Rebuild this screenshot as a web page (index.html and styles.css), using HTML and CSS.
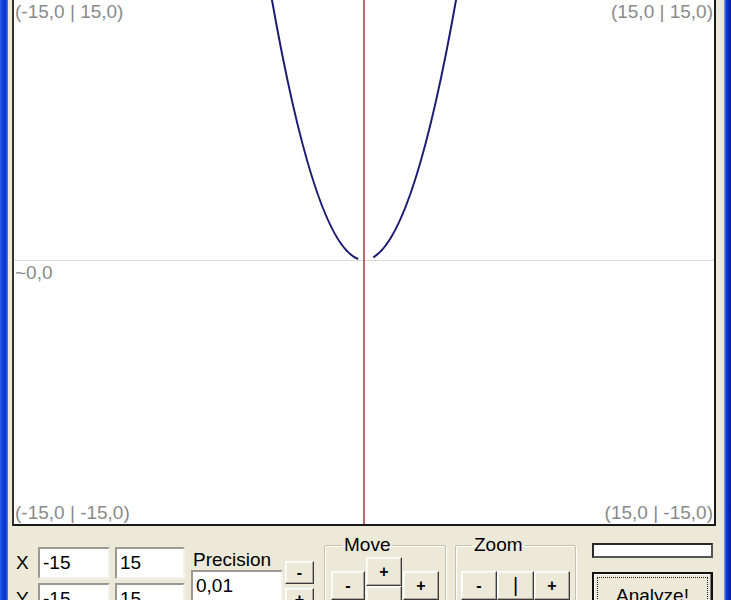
FILE: index.html
```html
<!DOCTYPE html>
<html lang="en">
<head>
    <meta charset="UTF-8">
    <title>Function plotter</title>
    <link rel="stylesheet" href="styles.css">
</head>
<body>
<div class="frame-l"></div>

<div class="client">
    <!-- 그래프 영역 -->
    <div class="plot">
        <svg class="graph" width="700" height="526" viewBox="0 0 700 526">
            <line x1="0" y1="262.5" x2="700" y2="262.5" stroke="#dcdcdc" stroke-width="1"/>
            <line x1="350" y1="0" x2="350" y2="526" stroke="#a83a3a" stroke-width="1.5"/>
            <path d="M254.3 -19.1 Q299.3 244.9 344.2 261" fill="none" stroke="#1c1c72" stroke-width="2"/>
            <path d="M359.3 259.3 Q402.5 234.6 445.7 -19.1" fill="none" stroke="#1c1c72" stroke-width="2"/>
        </svg>
        <span class="tag tl">(-15,0 | 15,0)</span>
        <span class="tag tr">(15,0 | 15,0)</span>
        <span class="tag origin">~0,0</span>
        <span class="tag bl">(-15,0 | -15,0)</span>
        <span class="tag br">(15,0 | -15,0)</span>
    </div>

    <!-- 아래 조작 패널 -->
    <div class="panel">
        <div class="coords">
            <span class="axis">X</span>
            <input class="field" type="text" value="-15">
            <input class="field second" type="text" value="15">
            <span class="axis">Y</span>
            <input class="field" type="text" value="-15">
            <input class="field second" type="text" value="15">
        </div>

        <div class="precision">
            <span class="label">Precision</span>
            <input class="field" type="text" value="0,01">
        </div>
        <div class="spin">
            <button class="btn">-</button>
            <button class="btn">+</button>
        </div>

        <fieldset class="group move">
            <legend>Move</legend>
            <div class="cross">
                <button class="btn up">+</button>
                <button class="btn left">-</button>
                <button class="btn right">+</button>
                <button class="btn down">-</button>
            </div>
        </fieldset>

        <fieldset class="group zoom">
            <legend>Zoom</legend>
            <div class="zoom-row">
                <button class="btn">-</button>
                <button class="btn">|</button>
                <button class="btn">+</button>
            </div>
        </fieldset>

        <div class="run">
            <div class="progress"></div>
            <button class="btn analyze"><span>Analyze!</span></button>
        </div>
    </div>
</div>

<div class="frame-r"></div>
</body>
</html>
```

FILE: styles.css
```css
*{
    box-sizing: border-box;
}
body{
    margin: 0;
    height: 600px;
    overflow: hidden;
    display: flex;
    background-color: #ece9d8;
    font-family: "Liberation Sans", Arial, sans-serif;
}

/* 창 테두리 */
.frame-l{
    width: 8px;
    flex-shrink: 0;
    background: linear-gradient(to right, #2a5be8, #0b3ad6 40%, #0a36cc 70%, #4f7ae8);
}
.frame-r{
    width: 7px;
    flex-shrink: 0;
    background: linear-gradient(to right, #8fa9ec, #1240d8 30%, #0628b4 70%, #001c98);
}
.client{
    width: 716px;
    padding: 0 8px 0 4px;
}

/* 그래프 */
.plot{
    position: relative;
    width: 704px;
    height: 530px;
    margin-top: -4px;
    background-color: #fff;
    border: 2px solid #1a1a1a;
    border-left-color: #333;
}
.graph{
    display: block;
}
.tag{
    position: absolute;
    font-size: 19px;
    line-height: 22px;
    color: #8a8a8a;
    white-space: nowrap;
}
.tl{ top: 3px; left: 1px; }
.tr{ top: 3px; right: 1px; }
.origin{ top: 264px; left: 1px; }
.bl{ bottom: 0; left: 1px; }
.br{ bottom: 0; right: 1px; }

/* 패널 */
.panel{
    display: flex;
    align-items: flex-start;
    height: 74px;
    font-size: 18px;
    color: #000;
}
.coords{
    display: grid;
    grid-template-columns: 20px 72px 75px;
    grid-auto-rows: 32px;
    row-gap: 4px;
    margin: 21px 0 0 6px;
}
.axis{
    line-height: 32px;
    font-size: 19px;
    margin-left: -2px;
}
.field{
    width: 72px;
    height: 32px;
    padding: 0 0 0 3px;
    font: 19px "Liberation Sans", Arial, sans-serif;
    color: #000;
    background-color: #fff;
    border: 2px solid;
    border-color: #9c9a90 #f2f1ea #f2f1ea #9c9a90;
    outline: none;
}
.coords .second{
    width: 70px;
    margin-left: 5px;
}
.precision{
    display: flex;
    flex-direction: column;
    margin: 21px 0 0 6px;
    width: 92px;
}
.label{
    line-height: 21px;
    font-size: 19px;
    padding: 2px 0 0 2px;
}
.precision .field{
    width: 92px;
}

/* 버튼 */
.btn{
    display: block;
    padding: 0;
    font: bold 16px "Liberation Sans", Arial, sans-serif;
    color: #000;
    background-color: #ece9d8;
    border: 1px solid;
    border-color: #fff #3c3c3c #3c3c3c #fff;
    box-shadow: inset -1px -1px #aca899, inset 1px 1px #f7f6f0;
}
.spin{
    margin: 35px 0 0 2px;
}
.spin .btn{
    width: 29px;
    height: 23px;
    margin-bottom: 4px;
}

/* 그룹박스 */
.group{
    margin: 9px 0 0 0;
    padding: 2px 0 0 6px;
    height: 80px;
    border: 1px solid #c4c1b1;
    box-shadow: inset 1px 1px #fff, 1px 1px #fff;
    border-radius: 2px;
}
.group legend{
    margin-left: 11px;
    padding: 0 2px;
    line-height: 20px;
    font-size: 19px;
}
.move{
    width: 122px;
    margin-left: 10px;
}
.cross{
    display: grid;
    grid-template-columns: 34px 36px 36px;
    grid-template-rows: 14px 15px 14px 15px;
    column-gap: 1px;
}
.cross .btn{
    height: 29px;
}
.up{ grid-column: 2; grid-row: 1 / 3; }
.left{ grid-column: 1; grid-row: 2 / 4; }
.right{ grid-column: 3; grid-row: 2 / 4; }
.down{ grid-column: 2; grid-row: 3 / 5; }

.zoom{
    width: 121px;
    margin-left: 9px;
    padding: 16px 0 0 5px;
}
.zoom-row{
    display: flex;
}
.zoom-row .btn{
    width: 36px;
    height: 29px;
}
.zoom-row .btn:nth-child(2){
    width: 37px;
    font-weight: normal;
    font-size: 20px;
}

/* 분석 */
.run{
    width: 121px;
    margin: 17px 0 0 16px;
}
.progress{
    height: 15px;
    background-color: #fff;
    border: 2px solid #2a2a2a;
    border-right-color: #555;
    border-bottom-color: #555;
}
.analyze{
    width: 121px;
    height: 36px;
    margin-top: 14px;
    padding: 3px;
    border: 2px solid #111;
    box-shadow: inset -1px -1px #808080, inset 1px 1px #fff;
    font: 19px "Liberation Sans", Arial, sans-serif;
}
.analyze span{
    display: block;
    height: 100%;
    padding-top: 8px;
    line-height: 20px;
    border: 1px dotted #222;
}
```
